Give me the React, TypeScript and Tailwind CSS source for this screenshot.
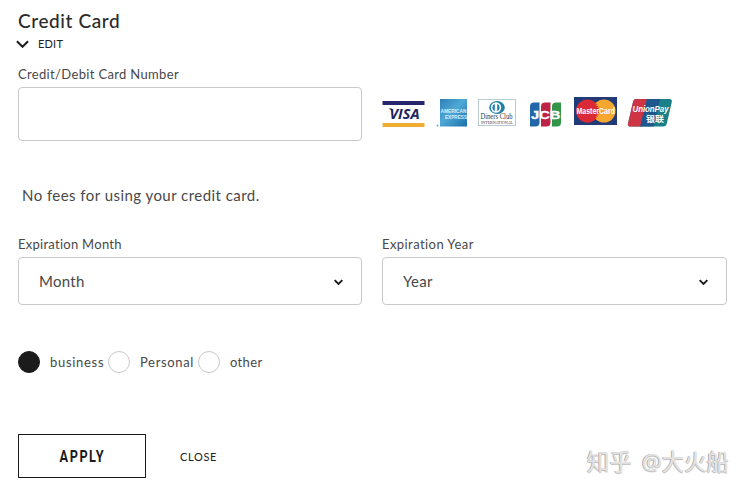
import React from "react";

function Chevron({ className, width }: { className: string; width: number }) {
  return (
    <svg viewBox="0 0 14 8" className={className} fill="none" stroke="#1b1b1b" strokeWidth={width}>
      <path d="M1 1l6 6 6-6" />
    </svg>
  );
}

function CardLogos() {
  return (
    <svg width="292" height="32" viewBox="382 96 292 32" className="block">
      <defs>
        <linearGradient id="amex" x1="0" y1="0" x2="1" y2="1">
          <stop offset="0" stopColor="#2f7fb8" />
          <stop offset="0.45" stopColor="#4fa9d6" />
          <stop offset="1" stopColor="#1c6faa" />
        </linearGradient>
        <clipPath id="union">
          <path d="M636 99h33.500q3 0 2.300 3l-5 21.500q-.7 3-3.500 3h-33.500q-2.500 0-1.800-3l5-21.500q.7-3 3-3z" />
        </clipPath>
      </defs>

      <rect x="382.500" y="101" width="42" height="4" fill="#25266c" />
      <rect x="382.500" y="123" width="42" height="4" fill="#f0ad32" />
      <path d="M388.500 108.500h3.500l1.500 3z" fill="#20235f" />
      <text x="389.500" y="119" textLength="30" lengthAdjust="spacingAndGlyphs" fontFamily="Open Sans, sans-serif" fontWeight="700" fontStyle="italic" fontSize="14.500" fill="#20235f">VISA</text>

      <rect x="440" y="99" width="27" height="27.500" fill="url(#amex)" />
      <circle cx="437.500" cy="125.500" r="1" fill="#5eabd2" />
      <g fontFamily="Liberation Sans, sans-serif" fontWeight="700" fontSize="5.500" fill="#d9f0fa">
        <text x="440.500" y="112.500" textLength="26" lengthAdjust="spacingAndGlyphs">AMERICAN</text>
        <text x="445" y="118.500" textLength="22" lengthAdjust="spacingAndGlyphs">EXPRESS</text>
      </g>

      <rect x="478.500" y="99.500" width="37" height="26" fill="#fff" stroke="#b8cbd2" />
      <ellipse cx="497" cy="107.500" rx="7.800" ry="6.500" fill="#1c7fa7" />
      <circle cx="496" cy="107.500" r="5.200" fill="#fff" />
      <path d="M494.800 103.800a4 4 0 0 0 0 7.400zM497.200 103.800a4 4 0 0 1 0 7.400z" fill="#1c7fa7" />
      <text x="480.500" y="119.200" textLength="32" lengthAdjust="spacingAndGlyphs" fontFamily="Liberation Serif, serif" fontSize="8" fill="#333b43">Diners Club</text>
      <text x="481" y="124.200" textLength="32" lengthAdjust="spacingAndGlyphs" fontFamily="Liberation Serif, serif" fontSize="4.500" fill="#333b43">INTERNATIONAL</text>

      <path d="M530 126.500v-20q0-4 4-4h5.500v20q0 4-4 4z" fill="#2367a8" />
      <path d="M541 126.500v-20q0-4 4-4h5.500v20q0 4-4 4z" fill="#bc2347" />
      <path d="M552 126.500v-20q0-4 4-4h5v20q0 4-4 4z" fill="#339548" />
      <text x="531" y="118.500" textLength="29.500" lengthAdjust="spacingAndGlyphs" fontFamily="Liberation Sans, sans-serif" fontWeight="700" fontSize="10" fill="#fff" stroke="#fff" strokeWidth=".3">JCB</text>

      <rect x="574" y="97" width="43" height="28" fill="#223a78" />
      <circle cx="604" cy="111" r="11.500" fill="#f5a72f" />
      <circle cx="587.500" cy="111" r="11.500" fill="#d92a35" />
      <path d="M595.700 103.500a11.500 11.500 0 0 1 0 15" fill="none" stroke="#f5a72f" strokeWidth="1.500" strokeDasharray="1 1" />
      <text x="576.500" y="114.200" textLength="38.500" lengthAdjust="spacingAndGlyphs" fontFamily="Liberation Sans, sans-serif" fontWeight="700" fontSize="9" fill="#fff">MasterCard</text>

      <g clipPath="url(#union)">
        <rect x="627" y="98" width="46" height="30" fill="#188086" />
        <path d="M627 98h21l-7 29h-14z" fill="#cf3445" />
        <path d="M647 98h13.500l-7 29h-13.500z" fill="#1d578d" />
      </g>
      <text x="632.500" y="111.500" textLength="36" lengthAdjust="spacingAndGlyphs" fontFamily="Liberation Sans, sans-serif" fontWeight="700" fontStyle="italic" fontSize="8.500" fill="#fff">UnionPay</text>
      <text x="646" y="121.500" textLength="18" lengthAdjust="spacingAndGlyphs" fontFamily="Noto Sans CJK SC, sans-serif" fontWeight="700" fontSize="8.500" fill="#fff">银联</text>
    </svg>
  );
}

function SelectBox({ label, value, className, labelClass }: { label: string; value: string; className: string; labelClass: string }) {
  return (
    <div className={"flex flex-col " + className}>
      <span className={"h-5 whitespace-nowrap text-[13px] leading-5 " + labelClass}>{label}</span>
      <button className="mt-[3px] flex h-12 items-center justify-between rounded-[4px] border border-[#c9c9c9] pl-5 pr-[18px]">
        <span className="text-[15px] leading-5 tracking-[0.3px]">{value}</span>
        <Chevron className="mt-px h-[6px] w-[9px]" width={3} />
      </button>
    </div>
  );
}

function Radio({ label, checked, className, labelClass }: { label: string; checked?: boolean; className: string; labelClass: string }) {
  return (
    <label className={"flex items-center gap-[10px] " + className}>
      <span className={"size-[22px] shrink-0 rounded-full border " + (checked ? "border-[#1b1b1b] bg-[#1b1b1b]" : "border-[#c9c9c9]")} />
      <span className={"-mt-px whitespace-nowrap text-[13px] leading-5 " + labelClass}>{label}</span>
    </label>
  );
}

export default function App() {
  return (
    <main className="flex h-[495px] w-[747px] flex-col bg-white pl-[18px] pr-5 font-['Lato',sans-serif] text-[#484848]">
      <h1 className="mt-[9px] h-6 text-[19px] font-medium leading-6 tracking-[0.6px] text-[#2a2a2a]">Credit Card</h1>
      <div className="-ml-[2px] mt-[3px] flex h-4 items-center gap-[9px] text-[#222]">
        <Chevron className="h-[8px] w-[13px]" width={2.1} />
        <span className="text-[11px] leading-4 tracking-[0.2px]">EDIT</span>
      </div>
      <span className="mt-[12px] h-5 text-[13px] leading-5 tracking-[0.34px]">Credit/Debit Card Number</span>
      <div className="mt-[3px] flex h-[54px] gap-5">
        <input aria-label="Card number" className="h-[54px] w-[344px] rounded-[4px] border border-[#c9c9c9] bg-white px-5 outline-none" />
        <div className="pt-[9px]"><CardLogos /></div>
      </div>
      <p className="ml-1 mt-[44px] h-5 text-[15px] leading-5 tracking-[0.45px]">No fees for using your credit card.</p>
      <div className="mt-[29px] flex gap-5">
        <SelectBox label="Expiration Month" value="Month" className="w-[344px]" labelClass="tracking-[0.27px]" />
        <SelectBox label="Expiration Year" value="Year" className="w-[345px]" labelClass="tracking-[0.43px]" />
      </div>
      <div className="mt-[46px] flex h-[22px] items-center">
        <Radio label="business" checked className="w-[90px]" labelClass="tracking-[0.7px]" />
        <Radio label="Personal" className="w-[90px]" labelClass="tracking-[0.65px]" />
        <Radio label="other" className="" labelClass="tracking-[0.35px]" />
      </div>
      <div className="mt-[61px] flex h-11 items-center">
        <button className="flex h-11 w-32 items-center justify-center border border-[#1b1b1b] text-[#1b1b1b]">
          <span className="-mt-px inline-block scale-x-[0.75] font-['Roboto',sans-serif] text-[17px] font-bold leading-5 tracking-[2px]">APPLY</span>
        </button>
        <button className="ml-[34px] mt-[2px] text-[11px] leading-4 tracking-[0.65px] text-[#222]">CLOSE</button>
        <span className="ml-auto mr-[-2px] mt-3 whitespace-nowrap font-['Noto_Sans','Noto_Sans_CJK_SC',sans-serif] text-[22.400px] leading-8 text-[#e4e4e4] [text-shadow:-1px_0_0_#b0b0b0,0_1px_1px_#b8b8b8] [word-spacing:4px]">知乎 @大火船</span>
      </div>
    </main>
  );
}
